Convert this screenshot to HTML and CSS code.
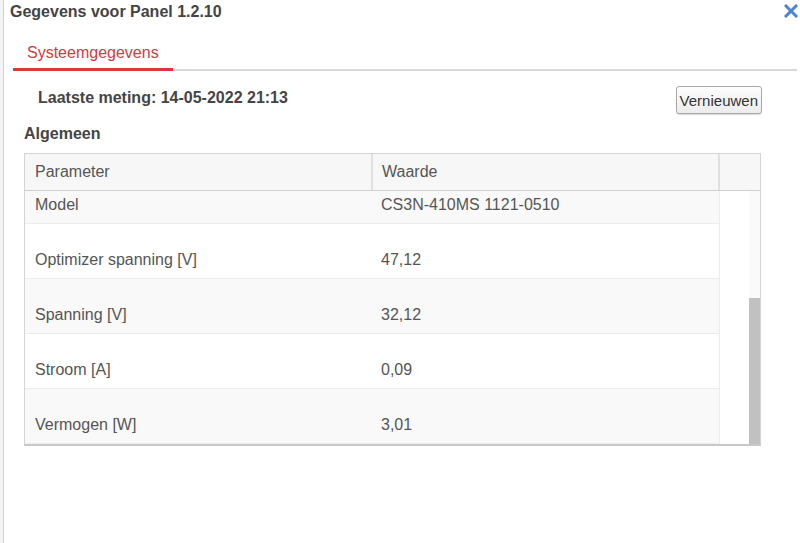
FILE: index.html
```html
<!DOCTYPE html>
<html lang="nl">
<head>
    <meta charset="UTF-8">
    <meta name="viewport" content="width=device-width, initial-scale=1.0">
    <title>Gegevens voor Panel 1.2.10</title>
    <link rel="stylesheet" href="styles.css">
</head>
<body>
    <div class="page-edge"></div>

    <div class="dialog">
        <div class="dialog-header">
            <span class="dialog-title">Gegevens voor Panel 1.2.10</span>
            <button class="close-btn" title="Sluiten">
                <svg width="14" height="14" viewBox="0 0 14 14"><path d="M2 2 L12 12 M12 2 L2 12" stroke="#4a82d9" stroke-width="3" stroke-linecap="square"/></svg>
            </button>
        </div>

        <div class="tabs">
            <div class="tab active">Systeemgegevens</div>
        </div>

        <div class="tab-content">
            <div class="meting-row">
                <span class="meting">Laatste meting: 14-05-2022 21:13</span>
                <button id="refresh">Vernieuwen</button>
            </div>

            <h3 class="section-title">Algemeen</h3>

            <div class="grid">
                <div class="grid-head">
                    <div class="cell">Parameter</div>
                    <div class="cell">Waarde</div>
                    <div class="cell spacer"></div>
                </div>
                <div class="grid-body">
                    <!-- list is scrolled to the bottom, rows above are clipped -->
                    <div class="rows">
                        <div class="row"><div class="cell">Model</div><div class="cell">CS3N-410MS 1121-0510</div></div>
                        <div class="row"><div class="cell">Optimizer spanning [V]</div><div class="cell">47,12</div></div>
                        <div class="row"><div class="cell">Spanning [V]</div><div class="cell">32,12</div></div>
                        <div class="row"><div class="cell">Stroom [A]</div><div class="cell">0,09</div></div>
                        <div class="row"><div class="cell">Vermogen [W]</div><div class="cell">3,01</div></div>
                    </div>
                    <div class="scrollbar"><div class="thumb"></div></div>
                </div>
            </div>
        </div>
    </div>
</body>
</html>
```

FILE: styles.css
```css
html, body {
    margin: 0;
    height: 100%;
}
body {
    display: flex;
    font-family: "Liberation Sans", Arial, sans-serif;
    background-color: #ffffff;
    color: #444;
    overflow: hidden;
}
.page-edge {
    width: 3px;
    background-color: #f4f4f4;
    border-right: 1px solid #d2d2d2;
}
.dialog {
    flex: 1;
    background-color: #fff;
}
.dialog-header {
    display: flex;
    justify-content: space-between;
    align-items: center;
    height: 24px;
    padding: 0 1px 0 6px;
}
.dialog-title {
    font-size: 16px;
    font-weight: bold;
    color: #444;
}
.close-btn {
    background: none;
    border: none;
    padding: 0;
    width: 16px;
    height: 16px;
    cursor: pointer;
}
.tabs {
    display: flex;
    margin: 14px 3px 0 9px;
    border-bottom: 2px solid #d8d8d8;
}
.tab {
    font-size: 16px;
    line-height: 20px;
    padding: 5px 14px 5px 14px;
    margin-bottom: -2px;
    border-bottom: 3px solid #d9393c;
    color: #d23a3f;
}
.tab-content {
    padding: 0 38px 0 20px;
}
.meting-row {
    display: flex;
    justify-content: space-between;
    align-items: center;
    margin-top: 15px;
}
.meting {
    font-size: 16px;
    line-height: 20px;
    font-weight: bold;
    color: #444;
    padding: 0 0 4px 14px;
}
#refresh {
    font-family: "Liberation Sans", Arial, sans-serif;
    font-size: 15px;
    color: #333;
    height: 28px;
    padding: 0 3px;
    border: 1px solid #a9a9a9;
    border-radius: 3px;
    background: linear-gradient(#fdfdfd, #ececec);
    box-shadow: 0 1px 1px rgba(0, 0, 0, 0.15);
}
.section-title {
    font-size: 16px;
    line-height: 20px;
    font-weight: bold;
    color: #444;
    margin: 10px 0 9px 0;
}
.grid {
    width: 735px;
    margin-right: -36px;
    border: 1px solid #d4d4d4;
    border-bottom: 2px solid #c8c8c8;
    font-size: 16px;
    color: #555;
}
.grid-head {
    display: flex;
    height: 36px;
    background-color: #f7f7f7;
    border-bottom: 1px solid #cfcfcf;
}
.grid-head .cell {
    width: 348px;
    line-height: 36px;
    padding-left: 10px;
    box-sizing: border-box;
    border-right: 2px solid #e0e0e0;
}
.grid-head .cell:nth-child(2) {
    width: 347px;
    padding-left: 9px;
}
.grid-head .spacer {
    flex: 1;
    border-right: none;
}
.grid-body {
    display: flex;
    height: 253px;
}
.rows {
    flex: 1;
    display: flex;
    flex-direction: column;
    justify-content: flex-end;
    overflow: hidden;
}
.scrollbar {
    width: 11px;
    display: flex;
    flex-direction: column;
    justify-content: flex-end;
    background-color: #fafafa;
}
.thumb {
    height: 146px;
    background-color: #c1c1c1;
}
.row {
    display: flex;
    flex-shrink: 0;
    width: 695px;
    height: 55px;
    box-sizing: border-box;
    border-right: 1px solid #ececec;
    border-bottom: 1px solid #ececec;
}
.row:nth-child(odd) {
    background-color: #f9f9f9;
}
.row .cell {
    width: 347px;
    padding: 26px 0 0 10px;
    line-height: 20px;
    box-sizing: border-box;
}
.row .cell:nth-child(2) {
    padding-left: 9px;
}
```
